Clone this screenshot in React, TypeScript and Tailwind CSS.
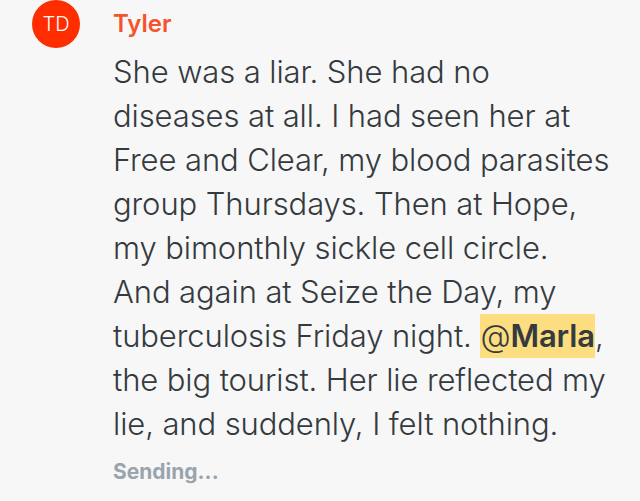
import React from 'react'

const font = { fontFamily: 'Inter, "Noto Sans", sans-serif' }

export default function App() {
  return (
    <div className="min-h-[501px] w-full bg-[#f7f7f7]" style={font}>
      <div className="flex gap-[33px] pl-[32px] pr-[10px]">
        <div className="w-12 h-12 shrink-0 rounded-full bg-[#ff2d00] flex items-center justify-center text-white text-[20px] font-light">
          TD
        </div>
        <div className="flex flex-col">
          <div className="text-[24px] font-semibold text-[#f4532d] leading-[48px] h-12">Tyler</div>
          <p className="mt-[2px] text-[31px] font-light leading-[44px] text-[#353a3f] whitespace-nowrap tracking-[-0.1px]">
            She was a liar. She had no<br />
            diseases at all. I had seen her at<br />
            Free and Clear, my blood parasites<br />
            group Thursdays. Then at Hope,<br />
            my bimonthly sickle cell circle.<br />
            And again at Seize the Day, my<br />
            tuberculosis Friday night.{' '}
            <span className="bg-[#fcdd80] inline-block leading-[44px]">
              @<span className="font-semibold">Marla</span>
            </span>
            ,<br />
            the big tourist. Her lie reflected my<br />
            lie, and suddenly, I felt nothing.
          </p>
          <div className="mt-[10px] text-[21px] font-bold text-[#9aa4ad]">Sending...</div>
        </div>
      </div>
    </div>
  )
}
